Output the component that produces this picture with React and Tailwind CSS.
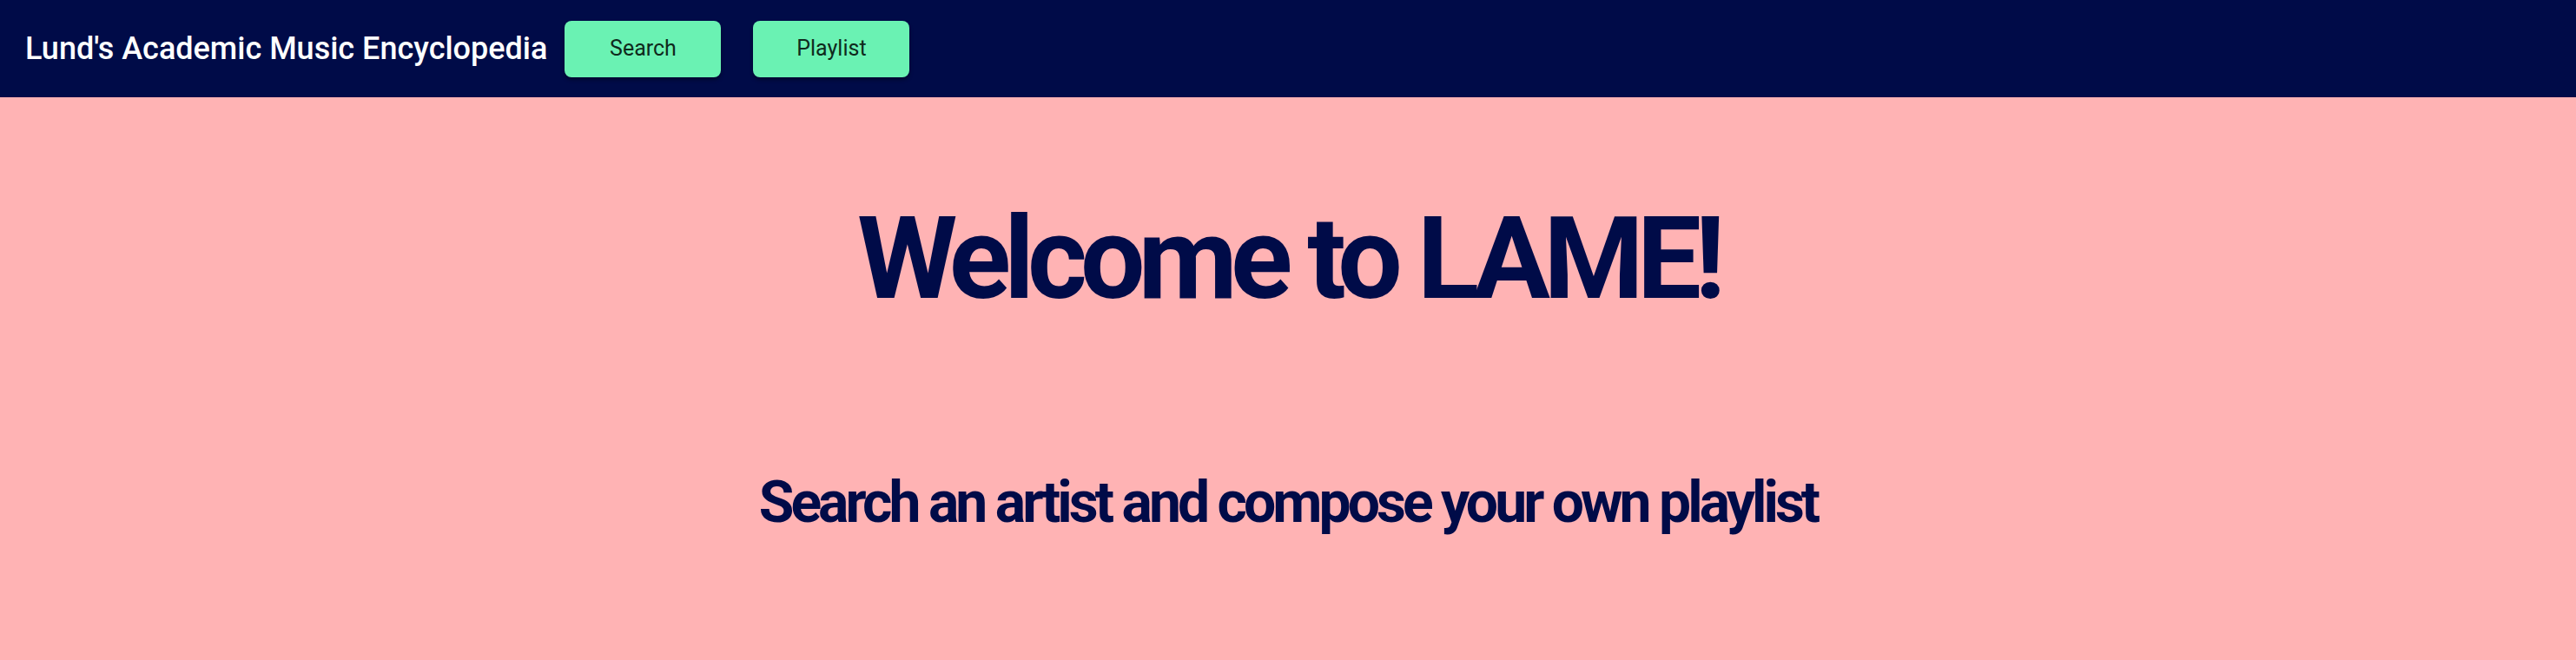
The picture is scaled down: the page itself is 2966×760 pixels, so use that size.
import React from 'react';

const App = () => {
  return (
    <div className="min-h-screen w-full bg-[#ffb3b4] font-['Roboto',sans-serif]">
      {/* NAVBAR */}
      <header className="flex h-[112px] items-center bg-[#000b48] pl-[29px]">
        <h1 className="text-[36px] font-medium text-white whitespace-nowrap">
          Lund's Academic Music Encyclopedia
        </h1>
        <div className="ml-[20px] flex gap-[37px]">
          <button className="h-[65px] w-[180px] rounded-[8px] bg-[#6af2b3] text-[25px] text-[#0f2a1c] shadow-[0_3px_4px_rgba(0,0,0,0.35)]">
            Search
          </button>
          <button className="h-[65px] w-[180px] rounded-[8px] bg-[#6af2b3] text-[25px] text-[#0f2a1c] shadow-[0_3px_4px_rgba(0,0,0,0.35)]">
            Playlist
          </button>
        </div>
      </header>

      {/* HERO */}
      <main className="flex flex-col items-center text-[#000b48]">
        <h2 className="mt-[120px] text-[132px] font-bold leading-none tracking-[-0.06em]">
          Welcome to LAME!
        </h2>
        <h3 className="mt-[182px] text-[66px] font-bold leading-none tracking-[-0.06em]">
          Search an artist and compose your own playlist
        </h3>
      </main>
    </div>
  );
};

export default App;
